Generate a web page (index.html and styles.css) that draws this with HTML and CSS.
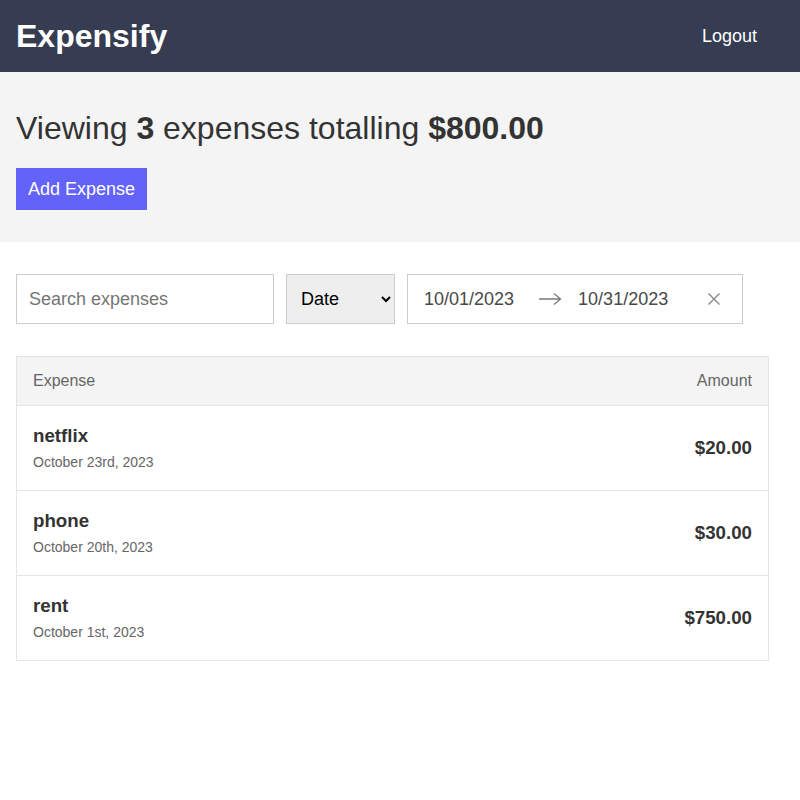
FILE: index.html
```html
<!DOCTYPE html>
<html>
<head>
<meta charset="utf-8">
<link rel="stylesheet" href="styles.css">
</head>
<body>
<header class="header">
  <div class="container header-inner">
    <h1 class="logo">Expensify</h1>
    <button class="logout">Logout</button>
  </div>
</header>
<section class="summary">
  <div class="container">
    <h2 class="summary-title">Viewing <b>3</b> expenses totalling <b>$800.00</b></h2>
    <button class="add-btn">Add Expense</button>
  </div>
</section>
<main class="container">
  <div class="filters">
    <input class="search" type="text" placeholder="Search expenses">
    <select class="sort"><option>Date</option><option>Amount</option></select>
    <div class="daterange">
      <span class="date">10/01/2023</span>
      <svg class="arrow" width="24" height="14" viewBox="0 0 24 14"><path d="M1 7H22M16 1.5L22.5 7L16 12.5" fill="none" stroke="#7a7a7a" stroke-width="1.3"/></svg>
      <span class="date">10/31/2023</span>
      <svg class="clear" width="14" height="14" viewBox="0 0 14 14"><path d="M1.5 1.5L12.5 12.5M12.5 1.5L1.5 12.5" stroke="#888" stroke-width="1.4"/></svg>
    </div>
  </div>
  <div class="list">
    <div class="list-header"><span>Expense</span><span>Amount</span></div>
    <div class="item">
      <div><h3 class="item-title">netflix</h3><span class="item-sub">October 23rd, 2023</span></div>
      <h3 class="item-amount">$20.00</h3>
    </div>
    <div class="item">
      <div><h3 class="item-title">phone</h3><span class="item-sub">October 20th, 2023</span></div>
      <h3 class="item-amount">$30.00</h3>
    </div>
    <div class="item">
      <div><h3 class="item-title">rent</h3><span class="item-sub">October 1st, 2023</span></div>
      <h3 class="item-amount">$750.00</h3>
    </div>
  </div>
</main>
</body>
</html>
```
FILE: styles.css
```css
* { box-sizing: border-box; }
body {
  margin: 0;
  font-family: "Liberation Sans", Arial, sans-serif;
  color: #333;
  background: #fff;
}
.container {
  width: 800px;
  padding: 0 31px 0 16px;
}
.header {
  background: #363c51;
  height: 72px;
}
.header-inner {
  height: 72px;
  display: flex;
  align-items: center;
  justify-content: space-between;
}
.logo {
  margin: 0;
  color: #fff;
  font-size: 32px;
  font-weight: bold;
}
.logout {
  background: none;
  border: none;
  color: #fff;
  font-family: inherit;
  font-size: 18px;
  padding: 0 12px;
}
.summary {
  background: #f4f4f4;
  padding: 37px 0 32px;
}
.summary-title {
  margin: 0 0 21px;
  font-size: 32px;
  font-weight: 300;
  line-height: 38px;
}
.summary-title b { font-weight: bold; }
.add-btn {
  display: block;
  background: #6363fa;
  color: #fff;
  border: none;
  font-family: inherit;
  font-size: 18px;
  height: 42px;
  padding: 0 12px;
  width: 131px;
  white-space: nowrap;
  text-align: center;
}
.filters {
  display: flex;
  gap: 12px;
  margin-top: 32px;
  margin-bottom: 32px;
}
.search, .sort, .daterange {
  height: 50px;
  border: 1px solid #cacccd;
  font-family: inherit;
  font-size: 18px;
}
.search {
  width: 258px;
  padding: 0 12px;
  color: #333;
}
.search::placeholder { color: #757575; }
.sort {
  width: 109px;
  background: #eee;
  padding: 0 10px;
  color: #000;
  border-radius: 0;
}
.daterange {
  width: 336px;
  display: flex;
  align-items: center;
  padding-left: 16px;
  color: #484848;
}
.arrow { margin: 0 16px 0 24px; }
.clear { margin-left: 39px; }
.list {
  border: 1px solid #e5e5e5;
  width: 753px;
}
.list-header {
  background: #f4f4f4;
  height: 49px;
  display: flex;
  align-items: center;
  justify-content: space-between;
  padding: 0 16px;
  color: #666;
  font-size: 16px;
  border-bottom: 1px solid #e5e5e5;
}
.item {
  height: 85px;
  display: flex;
  align-items: center;
  justify-content: space-between;
  padding: 0 16px;
  border-bottom: 1px solid #e5e5e5;
}
.item:last-child { border-bottom: none; height: 84px; }
.item-title {
  margin: 0 0 8px;
  font-size: 18.72px;
  font-weight: bold;
  line-height: 19px;
}
.item-sub {
  color: #666;
  font-size: 14px;
}
.item-amount {
  margin: 0;
  font-size: 18.72px;
  font-weight: bold;
}
```
